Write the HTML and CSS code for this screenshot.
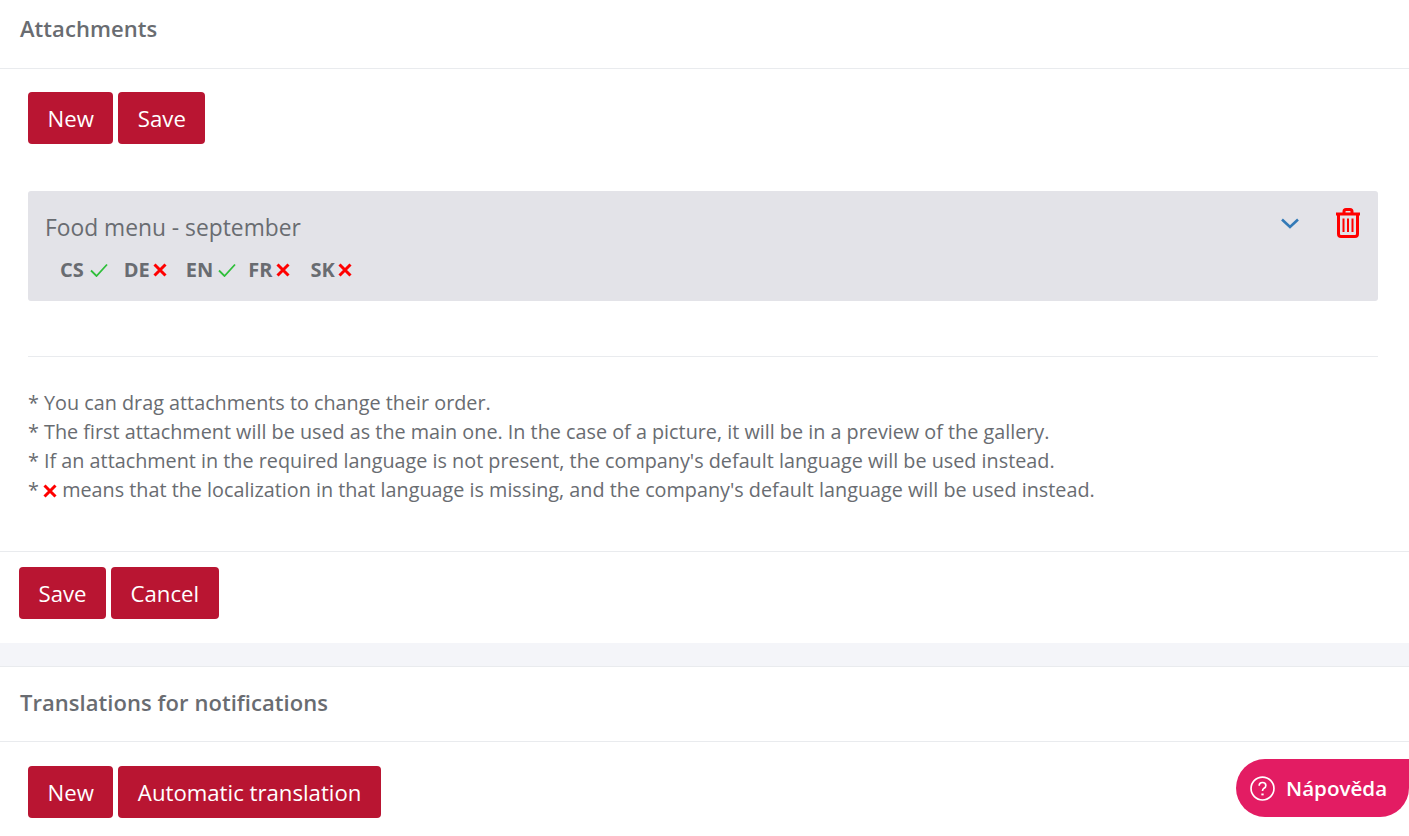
FILE: index.html
```html
<!DOCTYPE html>
<html lang="en">
<head>
    <meta charset="UTF-8">
    <meta name="viewport" content="width=device-width, initial-scale=1.0">
    <title>Attachments</title>
    <link rel="stylesheet" href="styles.css">
</head>
<body>
    <section class="card">
        <h2 class="card-title">Attachments</h2>
        <div class="card-body">
            <div class="toolbar">
                <button class="btn">New</button>
                <button class="btn">Save</button>
            </div>
            <div class="attachment">
                <div class="attachment-info">
                    <div class="attachment-name">Food menu - september</div>
                    <div class="langs">
                        <span class="lang lang-cs">CS<svg class="ico-check" viewBox="0 0 18 14"><path d="M1 7.5 L6.5 13 L17 1.5"/></svg></span>
                        <span class="lang lang-de">DE<svg class="ico-cross" viewBox="0 0 14 14"><path d="M1.5 1.5 L12.5 12.5 M12.5 1.5 L1.5 12.5"/></svg></span>
                        <span class="lang lang-en">EN<svg class="ico-check" viewBox="0 0 18 14"><path d="M1 7.5 L6.5 13 L17 1.5"/></svg></span>
                        <span class="lang lang-fr">FR<svg class="ico-cross" viewBox="0 0 14 14"><path d="M1.5 1.5 L12.5 12.5 M12.5 1.5 L1.5 12.5"/></svg></span>
                        <span class="lang lang-sk">SK<svg class="ico-cross" viewBox="0 0 14 14"><path d="M1.5 1.5 L12.5 12.5 M12.5 1.5 L1.5 12.5"/></svg></span>
                    </div>
                </div>
                <div class="attachment-actions">
                    <svg class="ico-chevron" viewBox="0 0 18 11"><path d="M1 1.5 L9 9 L17 1.5"/></svg>
                    <svg class="ico-trash" viewBox="0 0 26 30"><path d="M1 6 H25 M9 5 V3.5 Q9 1.5 11 1.5 H15 Q17 1.5 17 3.5 V5 M3.5 6.5 V26 Q3.5 28.5 6 28.5 H20 Q22.5 28.5 22.5 26 V6.5"/><path class="thin" d="M8.5 10.5 V24 M13 10.5 V24 M17.5 10.5 V24"/></svg>
                </div>
            </div>
            <hr class="divider">
            <div class="notes">
                <div>* You can drag attachments to change their order.</div>
                <div>* The first attachment will be used as the main one. In the case of a picture, it will be in a preview of the gallery.</div>
                <div>* If an attachment in the required language is not present, the company's default language will be used instead.</div>
                <div>* <svg class="ico-cross" viewBox="0 0 14 14"><path d="M1.5 1.5 L12.5 12.5 M12.5 1.5 L1.5 12.5"/></svg> means that the localization in that language is missing, and the company's default language will be used instead.</div>
            </div>
        </div>
        <div class="card-footer">
            <button class="btn">Save</button>
            <button class="btn">Cancel</button>
        </div>
    </section>
    <div class="band"></div>
    <section class="card">
        <h2 class="card-title card-title-second">Translations for notifications</h2>
        <div class="card-body card-body-second">
            <div class="toolbar">
                <button class="btn">New</button>
                <button class="btn">Automatic translation</button>
            </div>
        </div>
    </section>
    <a class="help" href="#">
        <svg class="ico-help" viewBox="0 0 24 24"><circle cx="12" cy="12" r="11"/><path d="M8.8 9.4 Q8.8 6.2 12 6.2 Q15.2 6.2 15.2 9 Q15.2 10.8 13.4 11.8 Q12 12.6 12 14.4"/><path class="dot" d="M12 16.8 V18.6"/></svg>
        Nápověda
    </a>
</body>
</html>
```

FILE: styles.css
```css
html, body {
    height: 100%;
}
body {
    margin: 0;
    background: #fff;
    color: #696c71;
    font-family: 'Open Sans', sans-serif;
    overflow: hidden;
}
.card-title {
    margin: 0;
    height: 68px;
    line-height: 57px;
    padding-left: 20px;
    font-size: 22px;
    font-weight: 600;
    letter-spacing: .05px;
    border-bottom: 1px solid #e9ebee;
}
.card-title-second {
    height: 74px;
    line-height: 71px;
}
.card-body {
    padding: 23px 31px 0 28px;
}
.card-body-second {
    padding-top: 24px;
}
.toolbar {
    display: flex;
    gap: 5px;
}
.btn {
    height: 52px;
    padding: 0 19.5px;
    border: none;
    border-radius: 4px;
    background: #b91532;
    color: #fff;
    font-family: inherit;
    font-size: 22.2px;
    cursor: pointer;
}
.attachment {
    display: flex;
    justify-content: space-between;
    height: 110px;
    margin-top: 47px;
    box-sizing: border-box;
    padding: 20px 17px;
    background: #e3e3e8;
    border-radius: 3px;
}
.attachment-name {
    font-size: 22.8px;
    line-height: 34px;
}
.langs {
    display: flex;
    margin-top: 12px;
    padding-left: 15px;
    font-size: 20px;
    font-weight: 700;
    line-height: 26px;
}
.lang {
    display: flex;
    align-items: center;
    gap: 5px;
    margin-right: 20px;
}
.lang-cs { margin-right: 16px; gap: 6px; }
.lang-de { margin-right: 19px; gap: 3px; }
.lang-en { margin-right: 12px; }
.lang-fr { gap: 4px; }
.lang-sk { gap: 3px; }
.ico-check {
    width: 18px;
    height: 14px;
    fill: none;
    stroke: #2fbf3a;
    stroke-width: 1.8;
}
.ico-cross {
    width: 14px;
    height: 14px;
    fill: none;
    stroke: #f00;
    stroke-width: 3;
}
.attachment-actions {
    display: flex;
    align-items: flex-start;
    gap: 36px;
}
.ico-chevron {
    width: 18px;
    height: 11px;
    margin-top: 7px;
    fill: none;
    stroke: #337ab7;
    stroke-width: 2.6;
}
.ico-trash {
    width: 26px;
    height: 30px;
    margin-top: -3px;
    fill: none;
    stroke: #f00;
    stroke-width: 3;
}
.ico-trash .thin {
    stroke-width: 2;
}
.divider {
    border: none;
    border-top: 1px solid #e9ebee;
    margin: 55px 0 0;
}
.notes {
    margin-top: 31px;
    font-size: 19.8px;
    line-height: 29px;
}
.notes .ico-cross {
    vertical-align: -1px;
    margin-left: -1px;
}
.card-footer {
    display: flex;
    gap: 5px;
    margin-top: 47px;
    padding: 15px 19px 24px;
    border-top: 1px solid #e9ebee;
}
.band {
    height: 23px;
    background: #f4f5f9;
    border-bottom: 1px solid #e9ebee;
}
.help {
    position: fixed;
    right: 0;
    bottom: 19px;
    display: flex;
    align-items: center;
    gap: 11px;
    height: 58px;
    width: 173px;
    box-sizing: border-box;
    padding-left: 14px;
    background: #e31c63;
    border-radius: 29px 0 29px 29px;
    color: #fff;
    font-size: 20.6px;
    font-weight: 600;
    text-decoration: none;
}
.ico-help {
    width: 25px;
    height: 25px;
    fill: none;
    stroke: #fff;
    stroke-width: 1.6;
}
.ico-help .dot {
    stroke-width: 2.2;
}
```
